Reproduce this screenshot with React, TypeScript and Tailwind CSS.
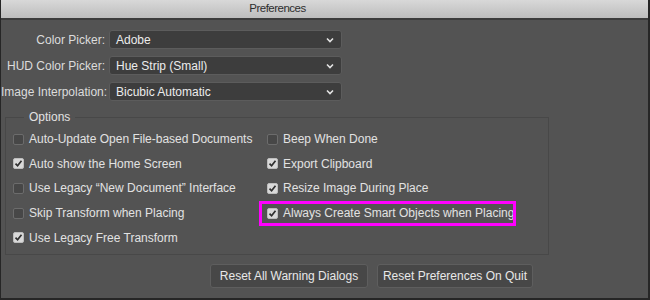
import React from "react";

const font = { fontFamily: '"Liberation Sans", Arial, Helvetica, sans-serif' };

function Chevron() {
  return (
    <svg width="8" height="6" viewBox="0 0 8 6" className="shrink-0">
      <polyline
        points="1,1.5 4,4.5 7,1.5"
        fill="none"
        stroke="#e4e4e4"
        strokeWidth="1.6"
      />
    </svg>
  );
}

function SelectRow({ label, value }: { label: string; value: string }) {
  return (
    <div className="flex items-center h-[19px]">
      <span className="w-[108px] pr-[4px] text-right text-[12px] text-[#dcdcdc] whitespace-nowrap">
        {label}
      </span>
      <div className="w-[233px] h-[19px] flex items-center justify-between pl-[6px] pr-[7px] rounded-[3px] bg-[#3d3d3d] border border-[#5c5c5c] text-[12px] text-[#ececec]">
        <span>{value}</span>
        <Chevron />
      </div>
    </div>
  );
}

function Check({
  label,
  checked,
  highlight,
}: {
  label: string;
  checked?: boolean;
  highlight?: boolean;
}) {
  return (
    <div className="relative flex items-center h-[24.6px] gap-[5px]">
      {checked ? (
        <span className="w-[11px] h-[11px] rounded-[2px] bg-[#d9d9d9] border border-[#bdbdbd] flex items-center justify-center">
          <svg width="9" height="9" viewBox="0 0 9 9">
            <polyline
              points="1.5,4.6 3.6,6.8 7.5,1.8"
              fill="none"
              stroke="#2f2f2f"
              strokeWidth="1.7"
            />
          </svg>
        </span>
      ) : (
        <span className="w-[11px] h-[11px] rounded-[2px] bg-[#474747] border border-[#6c6c6c]" />
      )}
      <span className="text-[12px] text-[#e2e2e2] whitespace-nowrap">{label}</span>
      {highlight && (
        <span className="absolute left-[-8px] top-[0px] w-[257px] h-[25px] border-[3px] border-[#ff00ff]" />
      )}
    </div>
  );
}

export default function App() {
  return (
    <div
      style={font}
      className="w-[650px] h-[300px] flex flex-col bg-[#535353] border-l border-r-2 border-b-2 border-[#262626] overflow-hidden"
    >
      {/* title bar */}
      <div className="h-[20px] shrink-0 flex items-center justify-center pr-[94px] bg-gradient-to-b from-[#d8d8d8] to-[#bdbdbd] border-b-2 border-[#3c3c3c]">
        <span className="text-[11.5px] tracking-[-0.5px] text-[#2e2e2e]">Preferences</span>
      </div>

      <div className="flex flex-col gap-[7px] pt-[10px] pl-[0px]">
        <SelectRow label="Color Picker:" value="Adobe" />
        <SelectRow label="HUD Color Picker:" value="Hue Strip (Small)" />
        <SelectRow label="Image Interpolation:" value="Bicubic Automatic" />
      </div>

      <fieldset className="ml-[4px] mt-[9px] w-[544px] border border-[#484848] pl-[7px] pt-[3px] pb-[4px]">
        <legend className="ml-[11px] px-[5px] text-[12px] text-[#e2e2e2] leading-[14px]">
          Options
        </legend>
        <div className="grid grid-cols-[254px_1fr]">
          <div className="flex flex-col">
            <Check label="Auto-Update Open File-based Documents" />
            <Check label="Auto show the Home Screen" checked />
            <Check label="Use Legacy “New Document” Interface" />
            <Check label="Skip Transform when Placing" />
            <Check label="Use Legacy Free Transform" checked />
          </div>
          <div className="flex flex-col">
            <Check label="Beep When Done" />
            <Check label="Export Clipboard" checked />
            <Check label="Resize Image During Place" checked />
            <Check label="Always Create Smart Objects when Placing" checked highlight />
          </div>
        </div>
      </fieldset>

      <div className="flex justify-end gap-[9px] pr-[115px] pt-[9px]">
        <button className="w-[158px] h-[24px] rounded-[3px] bg-[#474747] border border-[#5e5e5e] text-[12px] text-[#e8e8e8]">
          Reset All Warning Dialogs
        </button>
        <button className="w-[156px] h-[24px] rounded-[3px] bg-[#474747] border border-[#5e5e5e] text-[12px] text-[#e8e8e8]">
          Reset Preferences On Quit
        </button>
      </div>
    </div>
  );
}
